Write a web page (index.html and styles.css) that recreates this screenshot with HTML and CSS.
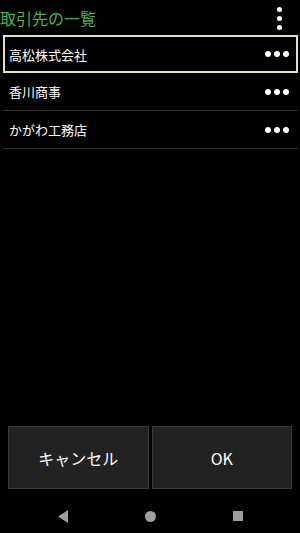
FILE: index.html
```html
<!DOCTYPE html>
<html lang="ja">
<head>
  <meta charset="UTF-8" />
  <title>取引先の一覧</title>
  <link rel="stylesheet" href="styles.css">
</head>
<body>
  <div class="screen">
    <header class="topbar">
      <h1>取引先の一覧</h1>
      <div class="overflow">
        <span></span><span></span><span></span>
      </div>
    </header>

    <ul class="client-list">
      <li class="client selected">
        <span class="name">高松株式会社</span>
        <span class="more"><i></i><i></i><i></i></span>
      </li>
      <li class="client">
        <span class="name">香川商事</span>
        <span class="more"><i></i><i></i><i></i></span>
      </li>
      <li class="client">
        <span class="name">かがわ工務店</span>
        <span class="more"><i></i><i></i><i></i></span>
      </li>
    </ul>

    <div class="actions">
      <button>キャンセル</button>
      <button>OK</button>
    </div>

    <nav class="navbar">
      <svg class="nav-icon" width="10" height="13" viewBox="0 0 10 13">
        <polygon points="10,0 10,13 0,6.5" fill="#9e9e9e" />
      </svg>
      <span class="home"></span>
      <span class="recent"></span>
    </nav>
  </div>
</body>
</html>
```

FILE: styles.css
```css
body {
  margin: 0;
  padding: 0;
  background-color: #000;
  font-family: "Noto Sans CJK JP", "Noto Sans", sans-serif;
  color: #fff;
}
.screen {
  height: 533px;
  display: flex;
  flex-direction: column;
}
.topbar {
  height: 35px;
  display: flex;
  align-items: center;
  justify-content: space-between;
}
.topbar h1 {
  margin: 0;
  font-size: 16px;
  font-weight: normal;
  color: #4caf50;
  line-height: 1;
}
.overflow {
  display: flex;
  flex-direction: column;
  gap: 4px;
  margin-right: 18px;
  margin-top: 1px;
}
.overflow span {
  width: 5px;
  height: 5px;
  border-radius: 50%;
  background: #fff;
}
.client-list {
  list-style: none;
  margin: 0;
  padding: 0 2px 0 3px;
  flex: 1;
}
.client {
  height: 38px;
  box-sizing: border-box;
  display: flex;
  align-items: center;
  justify-content: space-between;
  padding: 0 9px 0 6px;
  border-bottom: 1px solid #2e2e2e;
  font-size: 13px;
}
.client.selected {
  border: 2px solid #e4e4b8;
  padding: 0 7px 0 4px;
}
.more {
  display: flex;
  gap: 3px;
}
.more i {
  width: 6px;
  height: 6px;
  border-radius: 50%;
  background: #fff;
}
.actions {
  display: flex;
  gap: 3px;
  padding: 0 8px;
}
.actions button {
  flex: 1;
  height: 63px;
  background-color: #222;
  border: 1px solid #3a3a3a;
  color: #fff;
  font-family: inherit;
  font-size: 16px;
}
.navbar {
  height: 44px;
  box-sizing: border-box;
  padding-top: 21px;
  display: flex;
  justify-content: center;
  align-items: flex-start;
  gap: 77px;
}
.nav-icon {
  display: block;
  margin-top: 0;
}
.home {
  width: 11px;
  height: 11px;
  margin-top: 1px;
  border-radius: 50%;
  background: #9e9e9e;
}
.recent {
  width: 10px;
  height: 10px;
  margin-top: 1px;
  background: #9e9e9e;
}
```
